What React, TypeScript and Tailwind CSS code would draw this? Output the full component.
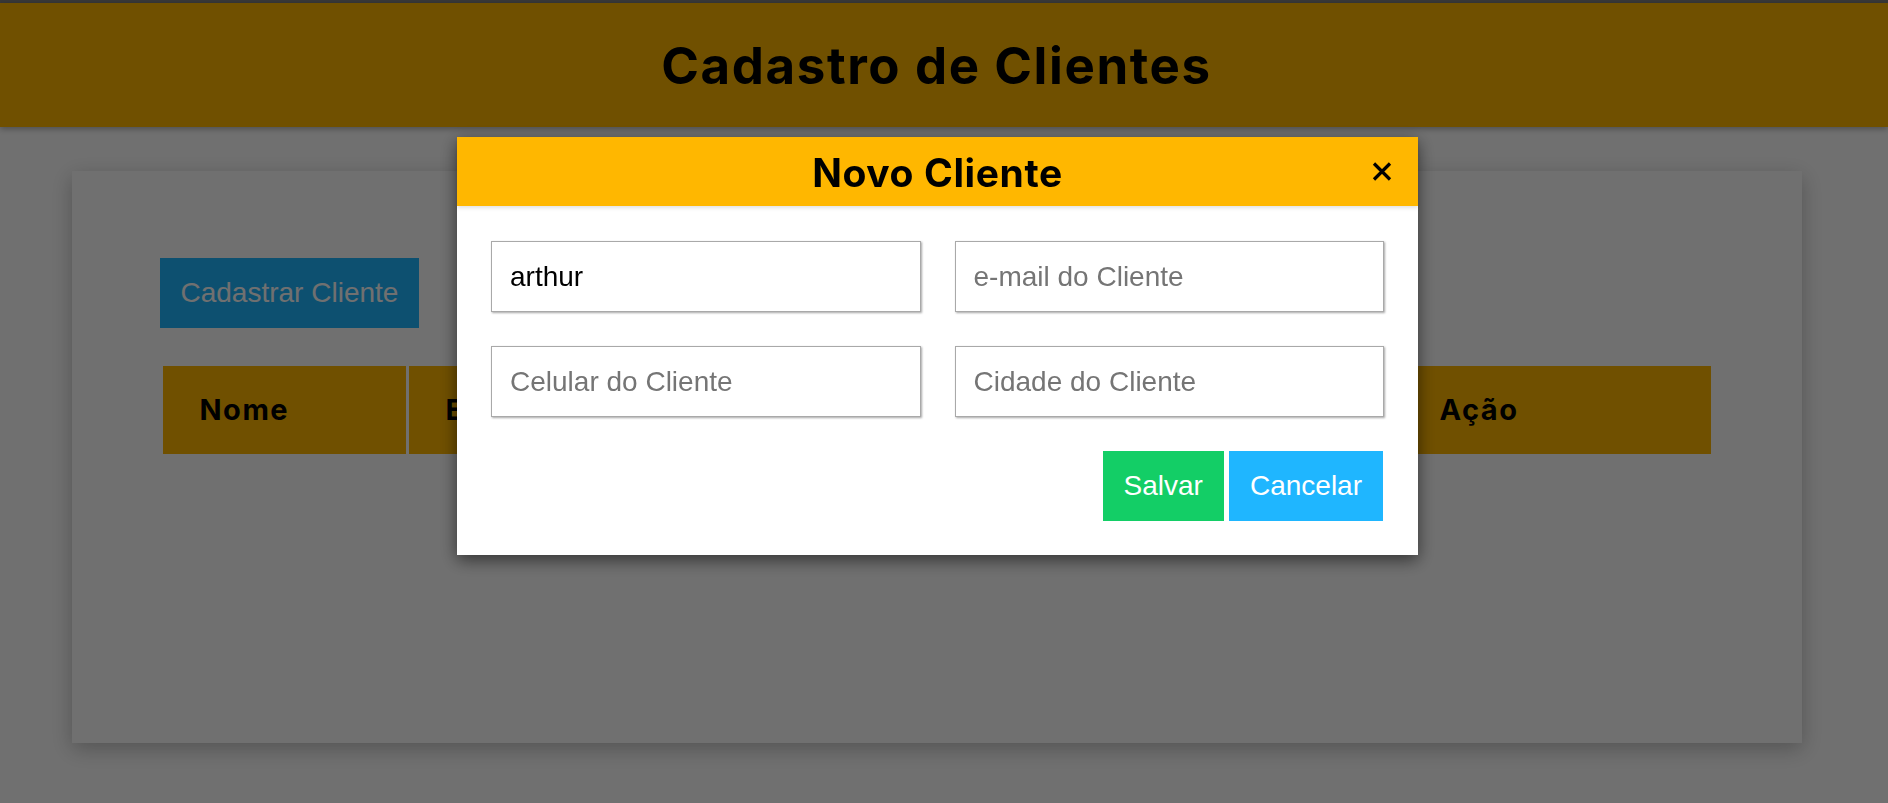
const columns = [
  { label: 'Nome', width: 'w-[243px]' },
  { label: 'Email', width: 'w-[328px]' },
  { label: 'Celular', width: 'w-[328px]' },
  { label: 'Cidade', width: 'w-[329px]' },
  { label: 'Ação', width: 'w-[308px]' },
];

const titleFont = { fontFamily: 'Inter, "Noto Sans", sans-serif' };

const CloseIcon = () => (
  <svg width="20" height="19" viewBox="0 0 20 19" fill="none">
    <path d="M2 1.5L18 17.5M18 1.5L2 17.5" stroke="#000" strokeWidth="3.2" strokeLinecap="butt" />
  </svg>
);

const inputClass =
  'h-[71px] pl-[18px] pr-[16px] text-[28px] text-black placeholder:text-[#757575] border border-[#a9a9a9] shadow-[1px_1px_2px_rgba(0,0,0,0.35)] outline-none';

const ClienteModal = () => {
  return (
    <div className="fixed inset-0 bg-[rgba(0,0,0,0.56)] pl-[2px] pr-[15px] pt-[137px] flex justify-center items-start">
      <div className="w-[961px] bg-white shadow-[0_5px_16px_rgba(0,0,0,0.55)]">
        <div className="relative h-[69px] bg-[#FFB700] flex items-center justify-center shadow-[0_2px_4px_rgba(0,0,0,0.12)]">
          <h2 className="text-[39px] font-bold tracking-[0.6px] text-black leading-none pt-[2px]" style={titleFont}>
            Novo Cliente
          </h2>
          <button className="absolute right-[26px] top-[25px]">
            <CloseIcon />
          </button>
        </div>

        <div className="px-[34px] pt-[35px] pb-[34px] font-['Liberation_Sans',Arial,sans-serif]">
          <div className="grid grid-cols-2 gap-x-[34px] gap-y-[34px]">
            <input defaultValue="arthur" className={inputClass} />
            <input placeholder="e-mail do Cliente" className={inputClass} />
            <input placeholder="Celular do Cliente" className={inputClass} />
            <input placeholder="Cidade do Cliente" className={inputClass} />
          </div>

          <div className="flex justify-end gap-[5px] mt-[34px] pr-[1px]">
            <button className="h-[70px] px-[21px] bg-[#13CE66] text-white text-[28px]">Salvar</button>
            <button className="h-[70px] px-[21px] bg-[#1FB6FF] text-white text-[28px]">Cancelar</button>
          </div>
        </div>
      </div>
    </div>
  );
};

const App = () => {
  return (
    <div className="relative min-h-[803px] bg-white">
      <div className="h-[3px] bg-[#808080]" />
      <header className="h-[124px] bg-[#FFB600] pr-[15px] flex items-center justify-center shadow-[0_2px_6px_rgba(0,0,0,0.3)]">
        <h1 className="text-[51px] font-bold tracking-[1.6px] text-black leading-none" style={titleFont}>
          Cadastro de Clientes
        </h1>
      </header>

      <div className="pr-[15px]">
        <main className="w-[1730px] h-[572px] mx-auto mt-[44px] bg-white shadow-[0_6px_20px_rgba(0,0,0,0.25)] px-[88px] pt-[87px]">
          <button className="h-[70px] px-[21px] bg-[#1FB6FF] text-white text-[28px] font-['Liberation_Sans',Arial,sans-serif]">
            Cadastrar Cliente
          </button>

          <table className="mt-[35px] table-fixed border-separate border-spacing-[3px] w-[1554px]">
            <thead>
              <tr>
                {columns.map((col) => (
                  <th
                    key={col.label}
                    className={`${col.width} h-[88px] bg-[#FFB600] text-left pl-[37px] text-[29px] font-bold tracking-[1.5px] text-black`}
                    style={titleFont}
                  >
                    {col.label}
                  </th>
                ))}
              </tr>
            </thead>
            <tbody></tbody>
          </table>
        </main>
      </div>

      <ClienteModal />
    </div>
  );
};

export default App;
